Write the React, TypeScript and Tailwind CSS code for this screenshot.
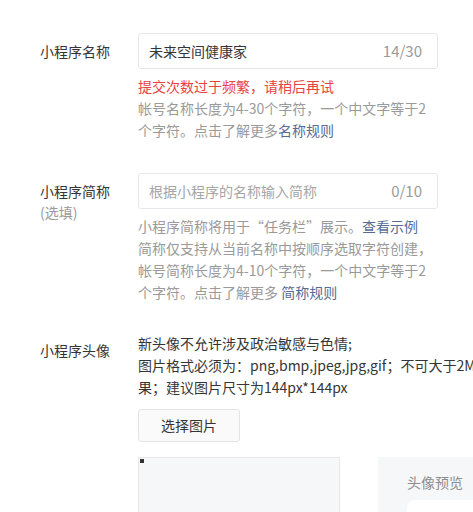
export default function App() {
  return (
    <div
      className="w-[473px] h-[512px] overflow-hidden bg-white text-[14px] text-[#353535]"
      style={{ fontFamily: '"Noto Sans CJK SC", "Noto Sans", sans-serif' }}
    >
      <div className="w-[700px] pt-[33px]">
        {/* 名称 */}
        <div className="flex">
          <div className="w-[138px] pl-[40px] leading-[36px]">小程序名称</div>
          <div className="w-[300px]">
            <div className="flex h-[36px] items-center justify-between rounded-[3px] border border-[#e7e7eb] pl-[10px] pr-[15px]">
              <span>未来空间健康家</span>
              <span className="text-[15px] text-[#9a9a9a]">14/30</span>
            </div>
            <p className="mt-[6px] leading-[22px] text-[#e64340]">提交次数过于频繁，请稍后再试</p>
            <p className="whitespace-nowrap leading-[22px] text-[#9a9a9a]">
              帐号名称长度为4-30个字符，一个中文字等于2
              <br />
              个字符。点击了解更多<span className="text-[#576b95]">名称规则</span>
            </p>
          </div>
        </div>

        {/* 简称 */}
        <div className="mt-[32px] flex">
          <div className="w-[138px] pl-[40px] pt-[8px] leading-[21px]">
            <div>小程序简称</div>
            <div className="text-[#9a9a9a]">(选填)</div>
          </div>
          <div className="w-[300px]">
            <div className="flex h-[36px] items-center justify-between rounded-[3px] border border-[#e7e7eb] pl-[10px] pr-[15px] text-[#a6a6a6]">
              <span>根据小程序的名称输入简称</span>
              <span className="text-[15px] text-[#9a9a9a]">0/10</span>
            </div>
            <p className="mt-[6px] whitespace-nowrap leading-[22px] text-[#9a9a9a]">
              小程序简称将用于“任务栏”展示。<span className="text-[#576b95]">查看示例</span>
              <br />
              简称仅支持从当前名称中按顺序选取字符创建，
              <br />
              帐号简称长度为4-10个字符，一个中文字等于2
              <br />
              个字符。点击了解更多 <span className="text-[#576b95]">简称规则</span>
            </p>
          </div>
        </div>

        {/* 头像 */}
        <div className="mt-[29px] flex">
          <div className="w-[138px] pl-[40px] leading-[36px]">小程序头像</div>
          <div className="flex-1">
            <p className="whitespace-nowrap leading-[22px]">
              新头像不允许涉及政治敏感与色情;
              <br />
              图片格式必须为：png,bmp,jpeg,jpg,gif；不可大于2M，修改后可预览效
              <br />
              果；建议图片尺寸为144px*144px
            </p>
            <button className="mt-[11px] h-[33px] w-[102px] rounded-[3px] border border-[#e4e4e4] bg-[#fafafa] text-[14px] text-[#353535]">
              选择图片
            </button>
            <div className="mt-[15px] flex gap-[38px]">
              <div className="relative h-[80px] w-[202px] border border-[#e7e7eb] bg-[#f6f7f9]">
                <span className="absolute left-[1px] top-[1px] h-[4px] w-[4px] bg-[#333]" />
              </div>
              <div className="w-[200px] bg-[#f6f7f9] pl-[29px] pt-[14px]">
                <div className="leading-[22px] text-[#8d8d8d]">头像预览</div>
                <div className="mt-[7px] h-[60px] w-[120px] rounded-[8px] bg-white" />
              </div>
            </div>
          </div>
        </div>
      </div>
    </div>
  );
}
